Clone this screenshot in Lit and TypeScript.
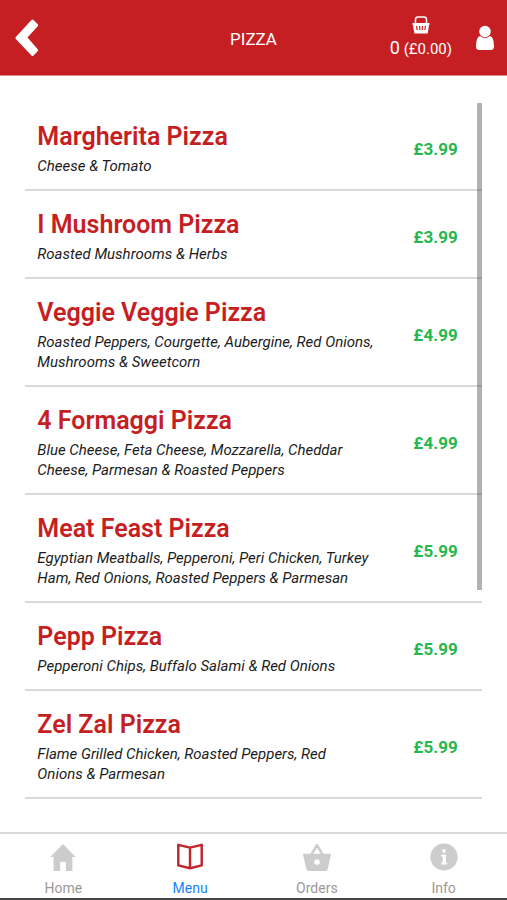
import { LitElement, html, css, svg } from "lit";
import { customElement, property } from "lit/decorators.js";
import { classMap } from "lit/directives/class-map.js";

interface Dish {
  name: string;
  toppings: string;
  price: string;
}

const dishes: Dish[] = [
  { name: "Margherita Pizza", toppings: "Cheese & Tomato", price: "£3.99" },
  { name: "I Mushroom Pizza", toppings: "Roasted Mushrooms & Herbs", price: "£3.99" },
  { name: "Veggie Veggie Pizza", toppings: "Roasted Peppers, Courgette, Aubergine, Red Onions, Mushrooms & Sweetcorn", price: "£4.99" },
  { name: "4 Formaggi Pizza", toppings: "Blue Cheese, Feta Cheese, Mozzarella, Cheddar Cheese, Parmesan & Roasted Peppers", price: "£4.99" },
  { name: "Meat Feast Pizza", toppings: "Egyptian Meatballs, Pepperoni, Peri Chicken, Turkey Ham, Red Onions, Roasted Peppers & Parmesan", price: "£5.99" },
  { name: "Pepp Pizza", toppings: "Pepperoni Chips, Buffalo Salami & Red Onions", price: "£5.99" },
  { name: "Zel Zal Pizza", toppings: "Flame Grilled Chicken, Roasted Peppers, Red Onions & Parmesan", price: "£5.99" },
];

const tabs = [
  {
    label: "Home",
    icon: svg`<path fill="currentColor" d="M16 2 2.500 16H6v15h7v-10h6v10h7V16h3.500z"/>`,
  },
  {
    label: "Menu",
    icon: svg`<path fill="none" stroke="currentColor" stroke-width="2.600" stroke-linejoin="round" d="M16 6 3.500 3v22L16 28l12.500-3V3zM16 6v22"/>`,
  },
  {
    label: "Orders",
    icon: svg`<path fill="currentColor" fill-rule="evenodd" d="M1 12.500h8l6-10q1-1.500 2 0l6 10h8L27.500 28.500q-.5 2.500-2.500 2.500H7q-2 0-2.500-2.500zM12 12.500h8L16 6zM16 18.300a3 3 0 1 0 0 6 3 3 0 0 0 0-6z"/>`,
  },
  {
    label: "Info",
    icon: svg`<circle cx="16" cy="16" r="14.500" fill="currentColor"/><circle cx="16" cy="9.500" r="2" fill="#fff"/><path fill="#fff" d="M13 13.500h5V22h1.500v2H13v-2h1.500v-6.500H13z"/>`,
  },
];

@customElement("menu-header")
export class MenuHeader extends LitElement {
  @property() heading = "";

  static styles = css`
    :host {
      display: block;
      background: #c61f23;
      color: #fff;
    }
    .bar {
      display: grid;
      grid-template-columns: 1fr auto 1fr;
      align-items: center;
      height: 75px;
      border-bottom: 1px solid #dd8a8c;
    }
    h1 {
      margin: 0;
      padding-top: 3px;
      font-size: 17px;
      line-height: 24px;
      font-weight: 400;
    }
    button {
      appearance: none;
      border: 0;
      padding: 0;
      background: none;
      color: inherit;
      font: inherit;
      cursor: pointer;
    }
    svg {
      display: block;
    }
    .back {
      justify-self: start;
      margin-left: 15px;
    }
    .tools {
      display: flex;
      align-items: center;
      justify-content: flex-end;
      gap: 24px;
      padding-right: 13px;
    }
    .basket {
      display: flex;
      flex-direction: column;
      align-items: center;
      gap: 4px;
      font-size: 15px;
      line-height: 20px;
      white-space: nowrap;
    }
    .count {
      font-size: 18px;
    }
  `;

  render() {
    return html`
      <header class="bar">
        <button class="back" aria-label="Back">
          <svg width="24" height="38" viewBox="0 0 24 38">
            <path fill="#fff" d="M.8 18 16.500 1q1-1 2 0l4.200 4.300q1 1 0 2L12.500 18.500l10.200 11.700q1 1 0 2L18.500 36.500q-1 1-2 0L.8 20q-.8-1 0-2z" />
          </svg>
        </button>
        <h1>${this.heading}</h1>
        <div class="tools">
          <button class="basket" aria-label="Basket">
            <svg width="18" height="18" viewBox="0 0 18 18">
              <path fill="none" stroke="#fff" stroke-width="1.500" d="M3.500 8V3.500Q3.500 1 6 1h6q2.500 0 2.500 2.500V8" />
              <path fill="#fff" fill-rule="evenodd" d="M.5 7h17v2H17l-1.300 8.500H2.300L1 9H.5zM4 10l.5 4h1.200L5.200 10zm3 0 .2 4h1.200l-.2-4zm2.800 0-.2 4h1.200l.2-4zm3 0-.5 4h1.200l.5-4z" />
            </svg>
            <span><span class="count">0</span> (£0.00)</span>
          </button>
          <button aria-label="Account">
            <svg width="18" height="26" viewBox="0 0 18 26">
              <circle cx="9" cy="6.500" r="5.800" fill="#fff" />
              <path fill="#fff" d="M4 11q5 4 10 0 4 1 4 10.500 0 3.500-3.500 3.500h-11Q0 25 0 21.500 0 12 4 11z" />
            </svg>
          </button>
        </div>
      </header>
    `;
  }
}

@customElement("dish-list")
export class DishList extends LitElement {
  @property({ attribute: false }) items: Dish[] = [];

  static styles = css`
    :host {
      display: block;
    }
    .frame {
      position: relative;
      margin: 27px 5% 0;
    }
    ul {
      list-style: none;
      margin: 0;
      padding: 0;
    }
    .dish {
      display: flex;
      align-items: center;
      justify-content: space-between;
      gap: 12px;
      padding: 18px 24px 13px 12px;
      border-bottom: 2px solid #dadada;
    }
    .text {
      flex: 1;
      max-width: 337px;
    }
    h2 {
      margin: 0 0 3px;
      color: #c61f23;
      font-size: 25px;
      line-height: 32px;
      font-weight: 600;
    }
    p {
      margin: 0;
      color: #1c1c1c;
      font-size: 15px;
      line-height: 20px;
      font-style: italic;
    }
    .price {
      color: #25b84c;
      font-size: 17px;
      line-height: 20px;
      font-weight: 700;
    }
    .thumb {
      position: absolute;
      top: 0;
      right: 0;
      width: 5px;
      height: 70%;
      background: rgba(0, 0, 0, 0.3);
    }
  `;

  render() {
    return html`
      <div class="frame">
        <ul>
          ${this.items.map(
            (dish) => html`
              <li class="dish">
                <div class="text">
                  <h2>${dish.name}</h2>
                  <p>${dish.toppings}</p>
                </div>
                <span class="price">${dish.price}</span>
              </li>
            `,
          )}
        </ul>
        <div class="thumb"></div>
      </div>
    `;
  }
}

@customElement("tab-bar")
export class TabBar extends LitElement {
  @property() current = "";

  static styles = css`
    :host {
      display: block;
    }
    nav {
      display: grid;
      grid-template-columns: repeat(4, 1fr);
      border-top: 2px solid #dadada;
      border-bottom: 2px solid #444;
      padding-top: 8px;
    }
    a {
      display: flex;
      flex-direction: column;
      align-items: center;
      gap: 6px;
      color: #999;
      font-size: 14px;
      line-height: 20px;
      text-decoration: none;
    }
    svg {
      display: block;
      color: #ccc;
    }
    .active {
      color: #1683f5;
    }
    .active svg {
      color: #c0272d;
    }
  `;

  render() {
    return html`
      <nav>
        ${tabs.map(
          (tab) => html`
            <a href="#" class=${classMap({ active: tab.label === this.current })}>
              <svg width="30" height="30" viewBox="0 0 32 32">${tab.icon}</svg>
              ${tab.label}
            </a>
          `,
        )}
      </nav>
    `;
  }
}

@customElement("app-root")
export class AppRoot extends LitElement {
  static styles = css`
    :host {
      display: flex;
      flex-direction: column;
      min-height: 100vh;
      background: #fff;
      font-family: Roboto, "Liberation Sans", sans-serif;
    }
    main {
      flex: 1;
    }
  `;

  render() {
    return html`
      <menu-header heading="PIZZA"></menu-header>
      <main><dish-list .items=${dishes}></dish-list></main>
      <tab-bar current="Menu"></tab-bar>
    `;
  }
}
